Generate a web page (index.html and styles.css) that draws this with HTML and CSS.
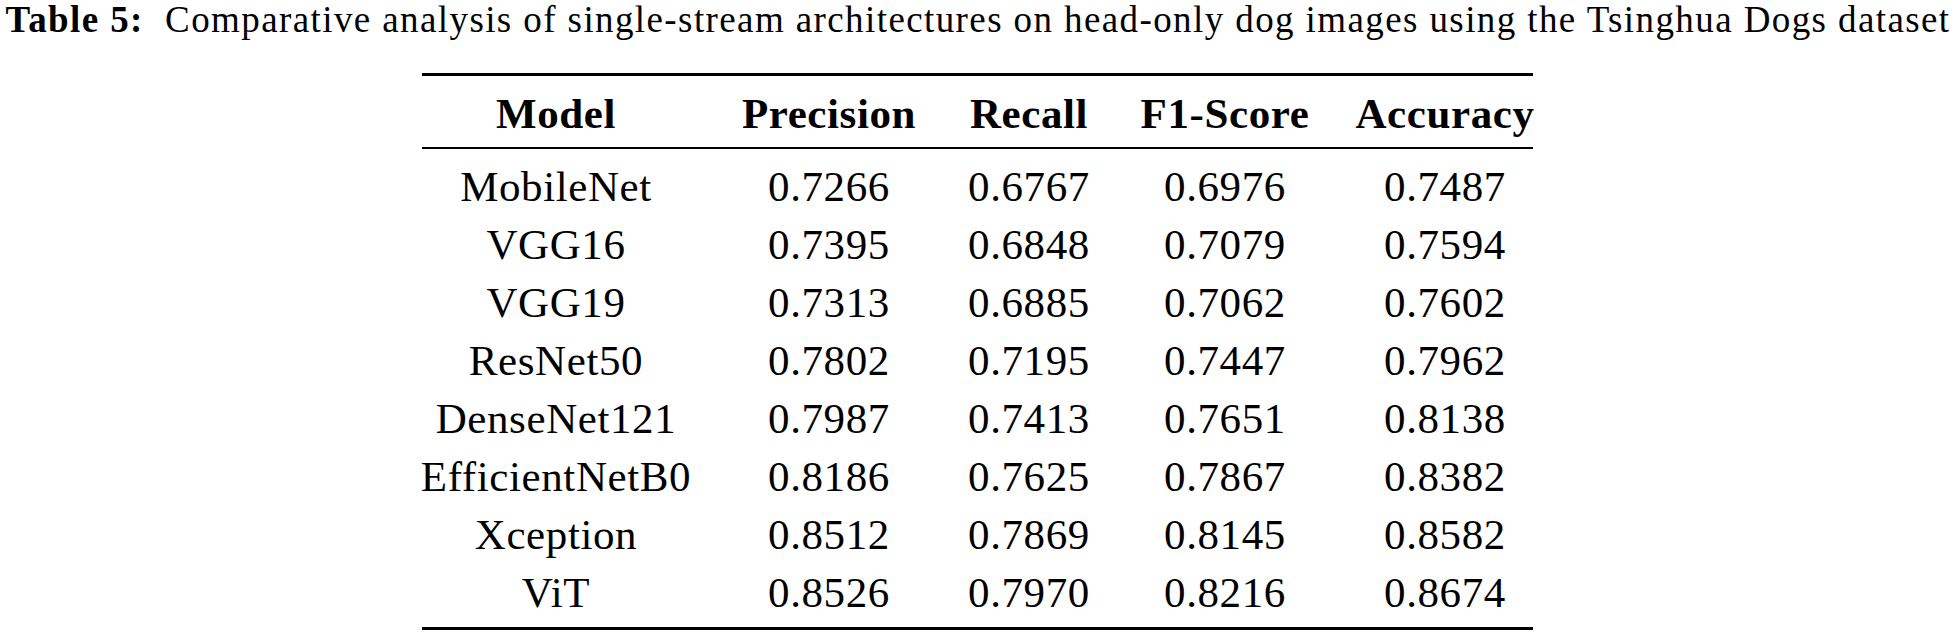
FILE: index.html
```html
<!DOCTYPE html>
<html lang="en">
<head>
<meta charset="utf-8">
<title>Table 5</title>
<link rel="stylesheet" href="styles.css">
</head>
<body>
<div class="page">
  <p class="caption"><span class="label">Table 5:</span>&nbsp; Comparative analysis of single-stream architectures on head-only dog images using the Tsinghua Dogs dataset</p>
  <div class="table">
    <div class="row head">
      <div class="cell">Model</div>
      <div class="cell">Precision</div>
      <div class="cell">Recall</div>
      <div class="cell">F1-Score</div>
      <div class="cell">Accuracy</div>
    </div>
    <div class="body">
      <div class="row"><div class="cell">MobileNet</div><div class="cell">0.7266</div><div class="cell">0.6767</div><div class="cell">0.6976</div><div class="cell">0.7487</div></div>
      <div class="row"><div class="cell">VGG16</div><div class="cell">0.7395</div><div class="cell">0.6848</div><div class="cell">0.7079</div><div class="cell">0.7594</div></div>
      <div class="row"><div class="cell">VGG19</div><div class="cell">0.7313</div><div class="cell">0.6885</div><div class="cell">0.7062</div><div class="cell">0.7602</div></div>
      <div class="row"><div class="cell">ResNet50</div><div class="cell">0.7802</div><div class="cell">0.7195</div><div class="cell">0.7447</div><div class="cell">0.7962</div></div>
      <div class="row"><div class="cell">DenseNet121</div><div class="cell">0.7987</div><div class="cell">0.7413</div><div class="cell">0.7651</div><div class="cell">0.8138</div></div>
      <div class="row"><div class="cell">EfficientNetB0</div><div class="cell">0.8186</div><div class="cell">0.7625</div><div class="cell">0.7867</div><div class="cell">0.8382</div></div>
      <div class="row"><div class="cell">Xception</div><div class="cell">0.8512</div><div class="cell">0.7869</div><div class="cell">0.8145</div><div class="cell">0.8582</div></div>
      <div class="row"><div class="cell">ViT</div><div class="cell">0.8526</div><div class="cell">0.7970</div><div class="cell">0.8216</div><div class="cell">0.8674</div></div>
    </div>
  </div>
</div>
</body>
</html>
```

FILE: styles.css
```css
html, body {
  margin: 0;
  padding: 0;
  background: #fff;
}

.page {
  width: 1956px;
  color: #000;
  font-family: "Liberation Serif", "Times New Roman", serif;
}

.caption {
  margin: 0;
  font-size: 37px;
  line-height: 40px;
  letter-spacing: 1.4px;
  text-align: center;
  white-space: nowrap;
}

.caption .label {
  font-weight: bold;
}

.table {
  margin: 33px 0 0 422px;
  width: 1111px;
  border-top: 3px solid #000;
  border-bottom: 3px solid #000;
  font-size: 43px;
  line-height: 58px;
  letter-spacing: 0.6px;
}

.row {
  display: grid;
  grid-template-columns: 268px 278px 122px 270px 170px;
}

.head {
  padding: 9px 0 4px;
  border-bottom: 2px solid #000;
  font-weight: bold;
}

.body {
  padding: 9px 0 5px;
}

.cell {
  display: flex;
  justify-content: center;
  white-space: nowrap;
}
```
